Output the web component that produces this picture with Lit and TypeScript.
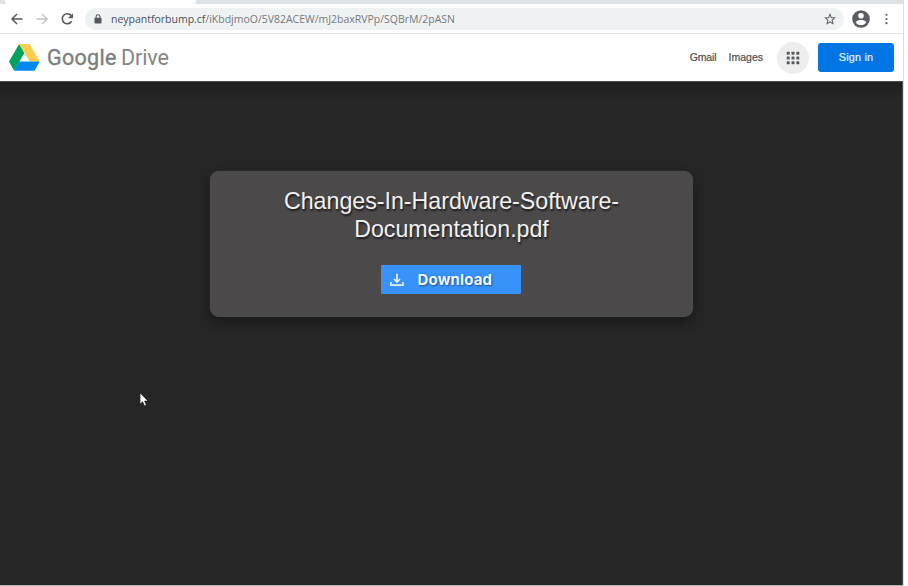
import { LitElement, html, css, svg } from "lit";
import { customElement } from "lit/decorators.js";

@customElement("app-root")
export class AppRoot extends LitElement {
  static styles = css`
    :host { display: block; width: 908px; height: 586px; background: #fff; overflow: hidden; font-family: "Liberation Sans", Arial, sans-serif; }
    * { box-sizing: border-box; }
    svg { display: block; flex: none; }
    .window { position: relative; width: 904px; height: 586px; display: flex; flex-direction: column; border-right: 1px solid #dcdddf; border-bottom: 1px solid #b8b8b8; }
    .tabs { height: 4px; flex: none; display: flex; background: #dee1e6; }
    .tab { width: 191px; margin-left: 5px; background: #fff; border-radius: 0 0 3px 3px; }
    .toolbar { height: 30px; flex: none; display: flex; align-items: center; background: #fff; border-bottom: 1px solid #dfe1e3; padding-left: 10px; }
    .nav { display: flex; gap: 11px; width: 75px; }
    .address { width: 759px; height: 22px; border-radius: 11px; background: #eff2f3; display: flex; align-items: center; padding: 0 8px 0 9px; }
    .url { flex: 1; margin-left: 9px; font: 10.5px/22px "Open Sans", "Noto Sans", sans-serif; letter-spacing: -0.01px; color: #77797c; white-space: nowrap; }
    .host { color: #4b4e52; }
    .avatar { margin-left: 8px; }
    .dots { margin-left: 14px; }
    .header { height: 47px; flex: none; display: flex; align-items: center; background: #fff; padding: 0 9px; }
    .wordmark { margin-left: 7px; display: flex; gap: 4px; color: #7d7d7d; font: 400 21.5px/30px Roboto, sans-serif; white-space: nowrap; padding-top: 1px; }
    .google { width: 70px; letter-spacing: 0.3px; -webkit-text-stroke: .35px #7d7d7d; }
    .drive { letter-spacing: -0.1px; color: #858585; }
    .links { margin-left: auto; display: flex; gap: 12px; font-size: 10.5px; color: #4c4c4c; -webkit-text-stroke: .2px #4c4c4c; }
    .gmail, .images { letter-spacing: -0.1px; line-height: 12px; margin-top: -2px; }
    .images { letter-spacing: 0; }
    .apps { width: 32px; height: 32px; margin-left: 14px; border-radius: 50%; background: #eee; display: flex; align-items: center; justify-content: center; }
    .signin { width: 76px; height: 29px; margin-left: 9px; border: 0; padding: 0 0 1px; border-radius: 3px; background: #0175e4; color: #e5f1fd; font: 10.8px "Liberation Sans", sans-serif; letter-spacing: .2px; -webkit-text-stroke: .2px #e5f1fd; }
    .page { flex: 1; background: linear-gradient(#1f1f1f, #262626 18px); border-top: 1px solid #4a4a4a; border-right: 1px solid #4a4a4a; padding-top: 89px; }
    .card { width: 483px; height: 146px; margin-left: 210px; border-radius: 9px; background: #4c494b; box-shadow: 0 5px 12px rgba(0, 0, 0, .4), 0 0 1px #5a5a5a; display: flex; flex-direction: column; align-items: center; padding-top: 16px; }
    .title { margin: 0; text-align: center; font-size: 23.2px; line-height: 28px; font-weight: 400; color: #f1f1f1; text-shadow: 1px 2px 2px rgba(0, 0, 0, .65); }
    .download { width: 140px; height: 29px; margin: 22px 2px 0 0; border: 0; padding: 0 0 0 9px; border-radius: 1px; display: flex; align-items: center; gap: 14px; background: #3792fb; color: #f0f5fb; font: 700 15px Inter, sans-serif; letter-spacing: .15px; text-shadow: 1px 1px 2px rgba(0, 0, 0, .45); }
    .cursor { position: absolute; left: 139px; top: 392px; }
  `;

  render() {
    return html`
      <div class="window">
        <div class="tabs"><div class="tab"></div></div>
        <div class="toolbar">
          <div class="nav">
            <svg width="14" height="14" viewBox="0 0 14 14" fill="none" stroke="#55585c" stroke-width="1.5"><path d="M12.5 7H2.3M7 2L2 7l5 5"/></svg>
            <svg width="14" height="14" viewBox="0 0 14 14" fill="none" stroke="#c0c2c4" stroke-width="1.4"><path d="M1.5 7h10M7 2l5 5-5 5"/></svg>
            <svg width="14" height="14" viewBox="0 0 14 14" fill="none" stroke="#55585c" stroke-width="1.6"><path d="M11.7 9.1A5 5 0 1 1 11.2 3.6"/><path d="M13 1.2v5H8.1z" fill="#55585c" stroke="none"/></svg>
          </div>
          <div class="address">
            <svg width="8" height="10" viewBox="0 0 8 10"><rect x=".5" y="3.7" width="7" height="5.8" rx=".8" fill="#55585c"/><path d="M2.1 4V2.6a1.9 1.9 0 0 1 3.8 0V4" fill="none" stroke="#55585c" stroke-width="1.1"/></svg>
            <div class="url"><span class="host">neypantforbump.cf</span><span class="path">/iKbdjmoO/5V82ACEW/mJ2baxRVPp/SQBrM/2pASN</span></div>
            <svg width="12" height="12" viewBox="0 0 12 12" fill="none" stroke="#5f6367" stroke-width="1.1"><path d="M6 1.4l1.3 3.2 3.5.3-2.7 2.3.8 3.4L6 8.8l-2.9 1.8.8-3.4L1.2 4.9l3.5-.3z"/></svg>
          </div>
          <svg class="avatar" width="18" height="18" viewBox="0 0 18 18"><circle cx="9" cy="9" r="8.8" fill="#5a5d61"/><circle cx="9" cy="5.8" r="2.8" fill="#fff"/><path d="M3.6 12.2C4.6 10.3 7 9.9 9 9.9s4.4.4 5.4 2.3C13.1 14.2 11.2 15.1 9 15.1s-4.1-.9-5.4-2.9z" fill="#fff"/></svg>
          <svg class="dots" width="5" height="12" viewBox="0 0 5 12" fill="#606367"><circle cx="2.5" cy="1.8" r="1.1"/><circle cx="2.5" cy="6" r="1.1"/><circle cx="2.5" cy="10.2" r="1.1"/></svg>
        </div>
        <div class="header">
          <svg width="31" height="27" viewBox="0 0 31 27"><path d="M10.2 0L0 17.6 5.1 26.8 15.4 9z" fill="#00a35c"/><path d="M10.2 0h10.3l10.3 17.6H20.5z" fill="#ffcc4d"/><path d="M10.2 17.6h20.6l-5.2 9.2H5.1z" fill="#0088f5"/></svg>
          <div class="wordmark"><span class="google">Google</span><span class="drive">Drive</span></div>
          <div class="links"><span class="gmail">Gmail</span><span class="images">Images</span></div>
          <div class="apps"><svg width="14" height="14" viewBox="0 0 14 14" fill="#5a5d60">${[0.7, 5.5, 10.3].map((y) => [0.7, 5.5, 10.3].map((x) => svg`<rect x=${x} y=${y} width="3" height="3" rx=".6"/>`))}</svg></div>
          <button class="signin">Sign in</button>
        </div>
        <div class="page">
          <div class="card">
            <h1 class="title">Changes-In-Hardware-Software-<br>Documentation.pdf</h1>
            <button class="download">
              <svg width="14" height="14" viewBox="0 0 14 14" fill="none" stroke="#e5f0fd" stroke-width="1.7"><path d="M1 9v3.2h12V9M7 .8v8M4 6l3 3 3-3"/></svg>
              <span>Download</span>
            </button>
          </div>
        </div>
        <svg class="cursor" width="10" height="16" viewBox="0 0 10 16"><path d="M1 .8v11.4l2.6-2.4 1.8 4.1 2-.9-1.8-3.9h3.5z" fill="#fff" stroke="#161625" stroke-width=".7"/></svg>
      </div>`;
  }
}
